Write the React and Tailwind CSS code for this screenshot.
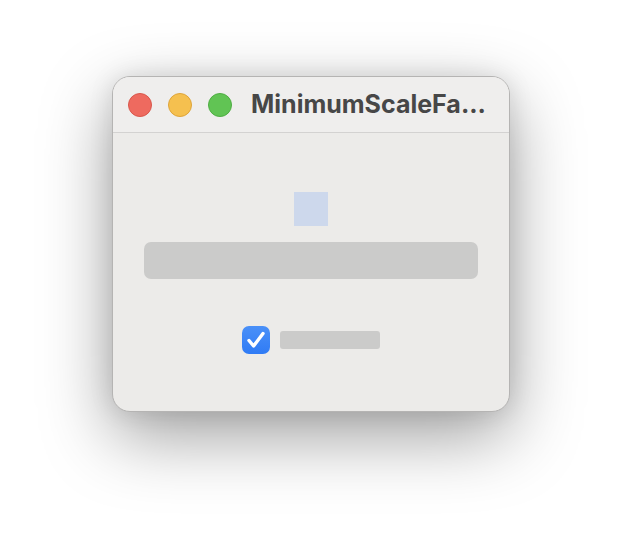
import React from "react";

function TrafficLight({ fill, ring }) {
  return (
    <span
      className="block w-6 h-6 rounded-full border"
      style={{ backgroundColor: fill, borderColor: ring }}
    />
  );
}

export default function App() {
  return (
    <div className="w-[622px] h-[560px] bg-white flex justify-center pt-[76px] font-['Inter','Liberation_Sans',sans-serif]">
      <div className="w-[398px] h-[336px] rounded-[18px] bg-[#ecebe9] border border-[#b5b4b3] shadow-[0_24px_70px_rgba(0,0,0,0.38),0_0_24px_rgba(0,0,0,0.10)] overflow-hidden flex flex-col">
        {/* Title bar */}
        <div className="h-[56px] shrink-0 flex items-center pl-[15px] bg-[#efeeed] border-b border-[#d3d2d1]">
          <div className="flex items-center gap-4">
            <TrafficLight fill="#ee6a5f" ring="#d8574c" />
            <TrafficLight fill="#f5c04f" ring="#dea43a" />
            <TrafficLight fill="#61c454" ring="#4fad43" />
          </div>
          <span className="ml-[19px] text-[25px] leading-none font-bold text-[#474747] whitespace-nowrap">
            MinimumScaleFa...
          </span>
        </div>

        {/* Content */}
        <div className="flex flex-col items-center pt-[59px]">
          <div className="w-[34px] h-[34px] bg-[#cdd8ec]" />
          <div className="mt-4 w-[334px] h-[37px] rounded-[7px] bg-[#cbcbca]" />
          <div className="mt-[47px] flex items-center gap-[10px]">
            <div className="w-7 h-7 rounded-[7px] bg-gradient-to-b from-[#4a90f8] to-[#2f7bf5] flex items-center justify-center">
              <svg width="22" height="22" viewBox="0 0 22 22" fill="none">
                <path
                  d="M4 11.5 L8.6 17 L18 4.5"
                  stroke="white"
                  strokeWidth="3.4"
                  strokeLinecap="round"
                  strokeLinejoin="round"
                />
              </svg>
            </div>
            <div className="w-[100px] h-[18px] rounded-[3px] bg-[#cbcbca]" />
          </div>
        </div>
      </div>
    </div>
  );
}
